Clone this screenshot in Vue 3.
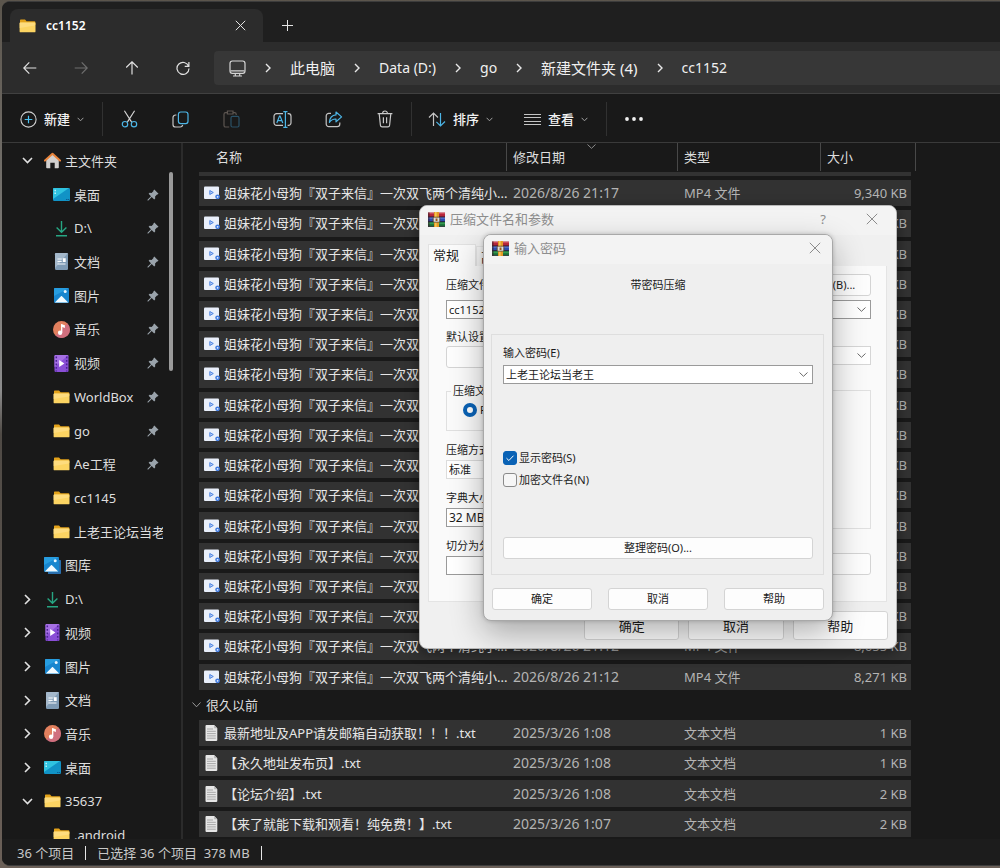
<template>
  <div class="desktop">
    <div class="window">
      <header class="tabs">
        <div class="tab">
          <FileIcon name="folder" />
          <span class="tab-title">cc1152</span>
          <button class="tab-close" aria-label="关闭标签页">
            <svg width="11" height="11" viewBox="0 0 11 11" fill="none" stroke="#e4e4e4"><path d="M.8.8l9.4 9.4M10.2.8L.8 10.2" /></svg>
          </button>
        </div>
        <button class="tab-new" aria-label="新标签页">
          <svg width="11" height="11" viewBox="0 0 11 11" fill="none" stroke="#e4e4e4"><path d="M5.5 0v11M0 5.5h11" /></svg>
        </button>
      </header>

      <nav class="navbar">
        <button class="nav-btn" aria-label="后退">
          <svg width="14" height="14" viewBox="0 0 14 14" fill="none" stroke="#e0e0e0" stroke-width="1.2"><path d="M13.3 7H1M6.3 1.4L.8 7l5.5 5.6" /></svg>
        </button>
        <button class="nav-btn" aria-label="前进" disabled>
          <svg width="14" height="14" viewBox="0 0 14 14" fill="none" stroke="#6e6e6e" stroke-width="1.2"><path d="M.7 7H13M7.7 1.4L13.2 7l-5.5 5.6" /></svg>
        </button>
        <button class="nav-btn" aria-label="向上">
          <svg width="14" height="14" viewBox="0 0 14 14" fill="none" stroke="#e0e0e0" stroke-width="1.2"><path d="M7 13.5V1M1.2 6.5L7 .8l5.8 5.7" /></svg>
        </button>
        <button class="nav-btn" aria-label="刷新">
          <svg width="14" height="14" viewBox="0 0 14 14" fill="none" stroke="#e0e0e0" stroke-width="1.2"><path d="M12.6 5.2A6 6 0 1 0 13 7.4M12.9 1v4.3H8.7" /></svg>
        </button>
        <div class="address">
          <svg width="17" height="17" viewBox="0 0 17 17" fill="none" stroke="#d5d5d5" stroke-width="1.2"><rect x="1" y="1" width="15" height="12.4" rx="2.4" /><path d="M1.5 10.8h14M6.3 13.4v2.6M10.7 13.4v2.6M4 16h9" /></svg>
          <template v-for="crumb in crumbs" :key="crumb.text">
            <svg width="6" height="10" viewBox="0 0 6 10" fill="none" stroke="#e8e8e8" stroke-width="1.4"><path d="M1 1l4 4-4 4" /></svg>
            <a href="#" class="crumb" :class="{ cjk: crumb.cjk }">{{ crumb.text }}</a>
          </template>
        </div>
      </nav>

      <div class="toolbar">
        <button class="tool new">
          <svg width="17" height="17" viewBox="0 0 17 17" fill="none"><circle cx="8.5" cy="8.5" r="7.6" stroke="#d0d0d0" stroke-width="1.1" /><path d="M8.5 4.7v7.6M4.7 8.5h7.6" stroke="#4cc2f1" stroke-width="1.2" /></svg>
          <span>新建</span>
          <svg class="caret" width="7" height="5" viewBox="0 0 7 5"><path d="M.6.8l2.9 3 2.9-3" /></svg>
        </button>
        <i class="divider"></i>
        <button class="tool icon" aria-label="剪切">
          <svg width="17" height="18" viewBox="0 0 17 18" fill="none" stroke-width="1.2"><path d="M3.4.8l7.4 11.6M13.6.8L6.2 12.4" stroke="#d0d0d0" /><circle cx="4" cy="14.2" r="2.7" stroke="#4cb5e6" /><circle cx="13" cy="14.2" r="2.7" stroke="#4cb5e6" /></svg>
        </button>
        <button class="tool icon" aria-label="复制">
          <svg width="17" height="17" viewBox="0 0 17 17" fill="none" stroke-width="1.2"><path d="M4.4 4H3.6A2.6 2.6 0 0 0 1 6.6v6.8A2.6 2.6 0 0 0 3.6 16h4.6a2.6 2.6 0 0 0 2.5-2" stroke="#c4c4c4" /><rect x="6.4" y="1" width="9.6" height="11.6" rx="2.4" stroke="#4cb5e6" /></svg>
        </button>
        <button class="tool icon" aria-label="粘贴" disabled>
          <svg width="17" height="18" viewBox="0 0 17 18" fill="none" stroke-width="1.2"><path d="M4.4 2.6H2.6C1.7 2.6 1 3.3 1 4.2v11.2c0 .9.7 1.6 1.6 1.6h3.6M10 2.6h1.6c.9 0 1.6.7 1.6 1.6v.8M4.4 1h5.6v3H4.4z" stroke="#5c5550" /><rect x="8" y="6.4" width="8" height="10.6" rx="1.5" stroke="#2a5166" /></svg>
        </button>
        <button class="tool icon" aria-label="重命名">
          <svg width="19" height="17" viewBox="0 0 19 17" fill="none" stroke-width="1.2"><path d="M10 2.6H3.6A2.6 2.6 0 0 0 1 5.2v6.6a2.6 2.6 0 0 0 2.6 2.6H10M14.6 2.6h.8A2.6 2.6 0 0 1 18 5.2v6.6a2.6 2.6 0 0 1-2.6 2.6h-.8" stroke="#c4c4c4" /><path d="M3.8 12l2.7-7h.6l2.7 7M4.8 9.7h4M12.4 1v15M10.3.7h4.2M10.3 16.3h4.2" stroke="#4cb5e6" /></svg>
        </button>
        <button class="tool icon" aria-label="共享">
          <svg width="18" height="17" viewBox="0 0 18 17" fill="none" stroke-width="1.2" stroke-linejoin="round"><path d="M6 2.4H3.8A2.6 2.6 0 0 0 1.2 5v8a2.6 2.6 0 0 0 2.6 2.6h8.4a2.6 2.6 0 0 0 2.6-2.6v-1.4" stroke="#c4c4c4" /><path d="M11 1l5.6 4.9L11 10.8V8C7.6 7.9 6 9 4.4 11.4 4.7 7 7 4.2 11 3.9z" stroke="#4cb5e6" /></svg>
        </button>
        <button class="tool icon" aria-label="删除">
          <svg width="16" height="18" viewBox="0 0 16 18" fill="none" stroke="#c8c8c8" stroke-width="1.2"><path d="M.6 3.6h14.8M5.6 3.4c0-3.2 4.8-3.2 4.8 0M2.2 3.8l1.2 11.4c.1 1 .8 1.7 1.8 1.7h5.6c1 0 1.700-.7 1.800-1.700l1.200-11.400M6.400 7.200v6M9.600 7.200v6" /></svg>
        </button>
        <i class="divider"></i>
        <button class="tool menu">
          <svg width="18" height="15" viewBox="0 0 18 15" fill="none" stroke-width="1.2"><path d="M5.5 14V1M1 5.5L5.5 1 10 5.5" stroke="#c4c4c4" /><path d="M12.5 1v13M8.4 9.8l4.1 4.2 4.5-4.5" stroke="#4cb5e6" /></svg>
          <span>排序</span>
          <svg class="caret" width="7" height="5" viewBox="0 0 7 5"><path d="M.6.8l2.9 3 2.9-3" /></svg>
        </button>
        <button class="tool menu">
          <svg width="17" height="13" viewBox="0 0 17 13" fill="none" stroke="#c4c4c4"><path d="M0 1.5h17M0 4.5h17M0 8.5h17M0 11.5h17" /></svg>
          <span>查看</span>
          <svg class="caret" width="7" height="5" viewBox="0 0 7 5"><path d="M.6.8l2.9 3 2.9-3" /></svg>
        </button>
        <i class="divider"></i>
        <button class="tool icon" aria-label="更多">
          <svg width="18" height="4" viewBox="0 0 18 4" fill="#f0f0f0"><circle cx="2" cy="2" r="1.9" /><circle cx="9" cy="2" r="1.9" /><circle cx="16" cy="2" r="1.9" /></svg>
        </button>
      </div>

      <main class="body">
        <aside class="sidebar">
          <ul class="tree">
            <li v-for="(item, i) in tree" :key="i" :class="{ child: item.child }">
              <span class="arrow">
                <svg v-if="item.arrow === 'down'" width="11" height="7" viewBox="0 0 11 7"><path d="M1 1l4.5 4.5L10 1" /></svg>
                <svg v-if="item.arrow === 'right'" width="7" height="11" viewBox="0 0 7 11"><path d="M1 1l4.5 4.5L1 10" /></svg>
              </span>
              <FileIcon :name="item.icon" />
              <span class="label">{{ item.text }}</span>
              <svg v-if="item.pinned" class="pin" width="12" height="12" viewBox="0 0 12 12"><path d="M7.3.5l4.2 4.2-1 .9-.5-.1-1.9 1.9.1 2-1 1L4.7 8l-3.4 3.5H.5v-.8L4 7.3 1.6 4.8l1-1 2 .1 1.900-1.900-.1-.6z" /></svg>
            </li>
          </ul>
          <div class="scrollbar"></div>
        </aside>

        <section class="files">
          <table>
            <colgroup>
              <col class="c-gutter" />
              <col class="c-name" />
              <col class="c-date" />
              <col class="c-type" />
              <col class="c-size" />
              <col class="c-end" />
            </colgroup>
            <thead>
              <tr>
                <td></td>
                <th class="h-name">名称</th>
                <th>
                  修改日期
                  <svg class="sort" width="9" height="5" viewBox="0 0 9 5" fill="none" stroke="#8c8c8c"><path d="M.5.5l4 3.8 4-3.8" /></svg>
                </th>
                <th>类型</th>
                <th>大小</th>
                <td class="h-end"></td>
              </tr>
            </thead>
            <tbody>
              <tr class="sliver">
                <td></td>
                <td colspan="4" class="cell"></td>
                <td></td>
              </tr>
              <tr v-for="(file, i) in videos" :key="'v' + i" class="file">
                <td></td>
                <td class="cell name"><div><FileIcon name="mp4" />{{ videoName }}</div></td>
                <td class="cell date">{{ file[0] }}</td>
                <td class="cell">MP4 文件</td>
                <td class="cell size">{{ file[1] }} KB</td>
                <td></td>
              </tr>
              <tr class="group">
                <td colspan="6">
                  <div>
                    <svg width="9" height="6" viewBox="0 0 9 6" fill="none" stroke="#9a9a9a"><path d="M.5.5l4 4.3 4-4.3" /></svg>
                    很久以前
                  </div>
                </td>
              </tr>
              <tr v-for="file in texts" :key="file[0]" class="file">
                <td></td>
                <td class="cell name"><div><FileIcon name="txt" />{{ file[0] }}</div></td>
                <td class="cell date">{{ file[1] }}</td>
                <td class="cell">文本文档</td>
                <td class="cell size">{{ file[2] }} KB</td>
                <td></td>
              </tr>
            </tbody>
          </table>
        </section>
      </main>

      <footer class="status">
        <span>36 个项目</span>
        <i></i>
        <span>已选择 36 个项目&nbsp; 378 MB</span>
        <i></i>
      </footer>
    </div>

    <form class="dialog archive" @submit.prevent>
      <div class="titlebar">
        <FileIcon name="rar" />
        <h2>压缩文件名和参数</h2>
        <button type="button" class="help" aria-label="帮助">?</button>
        <button type="button" class="close" aria-label="关闭"><svg width="12" height="12" viewBox="0 0 12 12"><path d="M.8.8l10.4 10.4M11.2.8L.8 11.2" /></svg></button>
      </div>
      <div class="pages">
        <button type="button" class="active">常规</button>
        <button type="button">高级</button>
      </div>
      <div class="panel">
        <div class="name-row">
          <label for="arc-name">压缩文件名(A)</label>
          <button type="button" class="btn">浏览(B)...</button>
        </div>
        <div class="combo">
          <input id="arc-name" v-model="archiveName" />
          <button type="button" aria-label="展开"><svg width="9" height="5" viewBox="0 0 9 5"><path d="M.5.5l4 3.8 4-3.8" /></svg></button>
        </div>
        <div class="columns">
          <div class="left">
            <label for="profile">默认设置</label>
            <button id="profile" type="button" class="btn">配置(F)...</button>
            <fieldset>
              <legend>压缩文件格式</legend>
              <label class="radio"><input type="radio" name="format" checked />RAR</label>
            </fieldset>
            <div class="field">
              <label for="method">压缩方式(C)</label>
              <select id="method" class="soft"><option>标准</option></select>
            </div>
            <div class="field">
              <label for="dict">字典大小(I)</label>
              <select id="dict" class="dict"><option>32 MB</option></select>
            </div>
            <div class="field">
              <label for="split">切分为分卷(V), 大小</label>
              <input id="split" class="text" />
            </div>
          </div>
          <div class="right">
            <label for="update">更新方式(U)</label>
            <div class="combo soft">
              <input id="update" />
              <button type="button" aria-label="展开"><svg width="9" height="5" viewBox="0 0 9 5"><path d="M.5.5l4 3.8 4-3.8" /></svg></button>
            </div>
            <fieldset><legend>压缩选项</legend></fieldset>
            <button type="button" class="btn" aria-label="设置密码"></button>
          </div>
        </div>
      </div>
      <div class="actions">
        <button type="button" class="btn">确定</button>
        <button type="button" class="btn">取消</button>
        <button type="button" class="btn">帮助</button>
      </div>
    </form>

    <form class="dialog password" @submit.prevent>
      <div class="titlebar">
        <FileIcon name="rar" />
        <h2>输入密码</h2>
        <button type="button" class="close" aria-label="关闭"><svg width="12" height="12" viewBox="0 0 12 12"><path d="M.8.8l10.4 10.4M11.2.8L.8 11.2" /></svg></button>
      </div>
      <p class="heading">带密码压缩</p>
      <div class="box">
        <label for="pwd">输入密码(E)</label>
        <div class="combo">
          <input id="pwd" v-model="password" />
          <button type="button" aria-label="展开"><svg width="9" height="5" viewBox="0 0 9 5"><path d="M.5.5l4 3.8 4-3.8" /></svg></button>
        </div>
        <div class="checks">
          <label><input v-model="showPassword" type="checkbox" />显示密码(S)</label>
          <label><input v-model="encryptNames" type="checkbox" />加密文件名(N)</label>
        </div>
        <button type="button" class="btn">整理密码(O)...</button>
      </div>
      <div class="actions">
        <button type="button" class="btn">确定</button>
        <button type="button" class="btn">取消</button>
        <button type="button" class="btn">帮助</button>
      </div>
    </form>
  </div>
</template>

<script setup>
import { ref, h } from 'vue'

const archiveName = ref('cc1152.rar')
const password = ref('上老王论坛当老王')
const showPassword = ref(true)
const encryptNames = ref(false)

// [width, height, svg body]
const icons = {
  folder: [17, 14, '<path d="M1 1.6C1 1 1.4.6 2 .6h4l1.600 1.700h7.900c.5 0 .9.4.9.9V6H1z" fill="#e3a21a"/><path d="M.6 4.100c0-.4.3-.7.7-.7h14.500c.4 0 .7.3.7.7v8.300c0 .5-.4.9-.9.9H1.500c-.5 0-.9-.4-.9-.9z" fill="#fcd462"/><path d="M.6 4.100c0-.4.3-.7.7-.7h14.500v3L.6 9z" fill="#ffe08a" opacity=".7"/>'],
  home: [17, 17, '<path d="M2.200 7.600L8.500 2l6.300 5.600v7.800c0 .5-.3.8-.8.8h-3.300v-5.400H6.300v5.400H3c-.5 0-.8-.3-.8-.8z" fill="#d2d0ce"/><path d="M1 8.600L8.500 1.800 16 8.600" fill="none" stroke="#e8833a" stroke-width="2" stroke-linecap="round" stroke-linejoin="round"/>'],
  desktop: [17, 13, '<rect width="17" height="13" rx="1.2" fill="#1193c6"/><path d="M0 1.200C0 .5.5 0 1.200 0H16L0 11z" fill="#2fc3e0"/><path d="M1.500 1.800h1.400v1.400H1.500zM1.500 4.600h1.400V6H1.500z" fill="#c9f4fb"/><path d="M13 11h1.500v1H13zM15 11h1.200v1H15z" fill="#0a5c93"/>'],
  download: [17, 17, '<path d="M8.500 1v11M3.600 7.500l4.900 4.800 4.900-4.800M3 15.800h11" fill="none" stroke="#27a683" stroke-width="1.4"/>'],
  doc: [17, 17, '<rect x="2" width="13" height="17" rx="1.2" fill="#7f9bb5"/><path d="M2 1.200C2 .5 2.500 0 3.200 0H15L2 15z" fill="#a4b8cb"/><path d="M4.500 6h4.200M4.500 8.500h4.200M4.500 11h8" stroke="#f4f8fb" stroke-width="1.2"/><path d="M9.800 5.200h2.900V9H9.800z" fill="#fff"/>'],
  picture: [17, 17, '<rect x="1" y="1" width="15" height="15" rx="1.2" fill="#1886cf"/><path d="M1 9V2.200C1 1.500 1.500 1 2.200 1H16z" fill="#279de0"/><path d="M1.800 15.500L8 9.300c.3-.3.7-.3 1 0l6.200 6.200z" fill="#f3fbff"/><circle cx="12.2" cy="4.6" r="1.5" fill="#e9f7ff"/>'],
  gallery: [17, 17, '<path d="M4 3h12c.6 0 1 .4 1 1v12c0 .6-.4 1-1 1H4z" fill="#2a6fae"/><rect width="15" height="15" rx="1.2" fill="#1886cf"/><path d="M0 8V1.200C0 .5.5 0 1.200 0H15z" fill="#279de0"/><path d="M.8 14.500L7 8.300c.3-.3.7-.3 1 0l6.200 6.200z" fill="#f3fbff"/><circle cx="11.2" cy="3.8" r="1.5" fill="#e9f7ff"/>'],
  music: [17, 17, '<circle cx="8.5" cy="8.5" r="8.5" fill="#e2805e"/><path d="M17 8.500A8.500 8.500 0 0 1 2.500 14.500L14.500 2.500a8.500 8.500 0 0 1 2.500 6z" fill="#c9698a" opacity=".75"/><path d="M8.700 3.200v8.300" stroke="#fff" stroke-width="1.3"/><path d="M8 3l3.900 1.300v2.600L8.700 5.800z" fill="#fff"/><circle cx="7.1" cy="11.7" r="2.2" fill="#fff"/>'],
  video: [17, 17, '<rect x="1.5" width="14" height="17" rx="1.2" fill="#8a4fd6"/><path d="M1.500 1.200C1.500.5 2 0 2.700 0h12.800L1.500 12z" fill="#a670e4"/><path d="M3.300 1.500v15M13.700 1.500v15" stroke="#4b2394" stroke-width="1.5" stroke-dasharray="1.8 1.7"/><path d="M6.200 5l5.200 3.500L6.200 12z" fill="#fff"/>'],
  mp4: [17, 14, '<rect width="15" height="12.5" rx="1" y=".5" fill="#e9effb"/><path d="M5.800 4.500v4l3.500-2z" fill="#b9cdf5" stroke="#3f7ae0" stroke-width=".9"/><circle cx="13.6" cy="10.8" r="2.4" fill="#3f7ae0"/><circle cx="13.6" cy="10.8" r=".9" fill="#e9effb"/>'],
  txt: [17, 16, '<path d="M1.500 1c0-.5.4-.9.9-.9h7.800l3.100 3.100V15c0 .5-.4.9-.9.9h-10c-.5 0-.9-.4-.9-.9z" fill="#e6e6e6"/><path d="M3 4h6M3 6.300h8.800M3 8.600h8.800M3 10.900h8.800M3 13.200h8.800" stroke="#a8a8a8"/><path d="M10.200.1v3.100h3.100z" fill="#b5b5b5"/>'],
  rar: [17, 15, '<path d="M0 .5h17v4.800H0z" fill="#b3243a"/><path d="M0 5.300h17v4.700H0z" fill="#2c4db0"/><path d="M0 10h17v4.700H0z" fill="#1d7a3c"/><path d="M0 1.600h17" stroke="#d0505c"/><path d="M0 6.300h17" stroke="#5876d2"/><path d="M0 11.200h17" stroke="#45a55a"/><path d="M0 4.900h17M0 9.600h17M0 14.300h17" stroke="#231a2a" stroke-width=".8"/><path d="M0 .5h1.600v14.200H0z" fill="#38202c" opacity=".6"/><path d="M6 0h5v15H6z" fill="#e59a25"/><path d="M7.200 0h1.300v15H7.200z" fill="#f8cf62"/><rect x="5.2" y="5.2" width="6.6" height="5" rx="1" fill="#d9dbe0" stroke="#5d4222" stroke-width=".8"/><path d="M7.600 6.600h1.900v2.300H7.600z" fill="#9c5b16"/>'],
}

const FileIcon = (props) => {
  const [width, height, body] = icons[props.name]
  return h('svg', { class: 'ico', width, height, viewBox: `0 0 ${width} ${height}`, innerHTML: body })
}
FileIcon.props = ['name']

const crumbs = [
  { text: '此电脑', cjk: true },
  { text: 'Data (D:)' },
  { text: 'go' },
  { text: '新建文件夹 (4)', cjk: true },
  { text: 'cc1152' },
]

const tree = [
  { icon: 'home', text: '主文件夹', arrow: 'down' },
  { icon: 'desktop', text: '桌面', child: true, pinned: true },
  { icon: 'download', text: 'D:\\', child: true, pinned: true },
  { icon: 'doc', text: '文档', child: true, pinned: true },
  { icon: 'picture', text: '图片', child: true, pinned: true },
  { icon: 'music', text: '音乐', child: true, pinned: true },
  { icon: 'video', text: '视频', child: true, pinned: true },
  { icon: 'folder', text: 'WorldBox', child: true, pinned: true },
  { icon: 'folder', text: 'go', child: true, pinned: true },
  { icon: 'folder', text: 'Ae工程', child: true, pinned: true },
  { icon: 'folder', text: 'cc1145', child: true },
  { icon: 'folder', text: '上老王论坛当老', child: true },
  { icon: 'gallery', text: '图库' },
  { icon: 'download', text: 'D:\\', arrow: 'right' },
  { icon: 'video', text: '视频', arrow: 'right' },
  { icon: 'picture', text: '图片', arrow: 'right' },
  { icon: 'doc', text: '文档', arrow: 'right' },
  { icon: 'music', text: '音乐', arrow: 'right' },
  { icon: 'desktop', text: '桌面', arrow: 'right' },
  { icon: 'folder', text: '35637', arrow: 'down' },
  { icon: 'folder', text: '.android', child: true },
]

const videoName = '姐妹花小母狗『双子来信』一次双飞两个清纯小...'

const videos = [
  ['2026/8/26 21:17', '9,340'],
  ...Array.from({ length: 14 }, () => ['2026/8/26 21:12', '8,900']),
  ['2026/8/26 21:12', '8,655'],
  ['2026/8/26 21:12', '8,271'],
]

const texts = [
  ['最新地址及APP请发邮箱自动获取！！！.txt', '2025/3/26 1:08', 1],
  ['【永久地址发布页】.txt', '2025/3/26 1:08', 1],
  ['【论坛介绍】.txt', '2025/3/26 1:08', 2],
  ['【来了就能下载和观看！纯免费！】.txt', '2025/3/26 1:07', 2],
]
</script>

<style>
body {
  background: #4d4741;
}
</style>

<style scoped>
* {
  box-sizing: border-box;
}

.desktop {
  position: relative;
  height: 100vh;
  padding: 1px 0 2px 2px;
  overflow: hidden;
  background: linear-gradient(#5b554c, #8c8c8c 45%, #4f4a45 50%, #6b6058);
  font: 13px/16px "Noto Sans", "Noto Sans CJK SC", sans-serif;
  text-spacing-trim: space-all;
  color: #dedede;
}

button,
input,
select {
  font: inherit;
  color: inherit;
}

button {
  margin: 0;
  padding: 0;
  border: 0;
  background: none;
}

svg {
  display: block;
  flex: none;
}

.window {
  display: flex;
  flex-direction: column;
  height: 100%;
  border: 1px solid #3c3c3c;
  border-right: 0;
  border-left: 0;
  border-radius: 8px 0 0 8px;
  background: #191919;
  overflow: hidden;
}

.tabs {
  display: flex;
  align-items: flex-end;
  height: 40px;
  flex: none;
  background: #1f1f1f;
}

.tab {
  display: flex;
  align-items: center;
  width: 253px;
  height: 33px;
  margin-left: 8px;
  padding: 0 17px 0 9px;
  border-radius: 8px 8px 0 0;
  background: #2c2c2c;
}

.tab-title {
  flex: 1;
  margin-left: 10px;
  font-size: 12px;
  font-weight: 600;
  color: #fff;
}

.tab-new {
  display: grid;
  place-items: center;
  width: 48px;
  height: 33px;
}

.navbar {
  display: flex;
  align-items: center;
  height: 52px;
  flex: none;
  padding: 1px 0 0 2px;
  background: #2c2c2c;
  border-bottom: 1px solid #404040;
}

.nav-btn {
  display: grid;
  place-items: center;
  width: 51px;
  height: 34px;
}

.address {
  display: flex;
  flex: 1;
  align-items: center;
  gap: 19px;
  height: 34px;
  margin-left: 6px;
  padding-left: 15px;
  border-radius: 4px 0 0 4px;
  background: #373737;
}

.crumb {
  font-size: 14px;
  line-height: 20px;
  color: #f0f0f0;
  text-decoration: none;
  white-space: nowrap;
}

.crumb.cjk {
  font-size: 15px;
}

.toolbar {
  display: flex;
  align-items: center;
  height: 49px;
  flex: none;
  padding-top: 2px;
  border-bottom: 1px solid #3a3a3a;
}

.tool {
  display: flex;
  align-items: center;
  gap: 7px;
  height: 34px;
  font-weight: 500;
  color: #f2f2f2;
}

.tool.new {
  width: 99px;
  padding-left: 18px;
}

.tool.icon {
  justify-content: center;
  width: 51px;
}

.tool.menu {
  width: 96px;
  padding-left: 15px;
}

.caret {
  fill: none;
  stroke: #a0a0a0;
}

.divider {
  width: 1px;
  height: 34px;
  margin: 0 1px;
  background: #313131;
}

.body {
  display: flex;
  flex: 1;
  min-height: 0;
}

.sidebar {
  position: relative;
  width: 181px;
  flex: none;
  overflow: hidden;
  border-right: 2px solid #2b2b2b;
}

.tree {
  display: grid;
  grid-auto-rows: 1fr;
  height: calc(100% + 12px);
  width: 161px;
  margin: 1px 0 0;
  padding: 0;
  list-style: none;
}

.tree li {
  display: flex;
  align-items: center;
  min-width: 0;
  padding-left: 18px;
}

.tree .arrow {
  display: grid;
  place-items: center;
  width: 14px;
  margin-right: 10px;
  fill: none;
  stroke: #e2e2e2;
  stroke-width: 1.6;
}

.tree .child .arrow {
  margin-right: 19px;
}

.tree .label {
  flex: 1;
  margin-left: 4px;
  overflow: hidden;
  white-space: nowrap;
}

.pin {
  margin-right: 4px;
  fill: #9aa3ab;
}

.scrollbar {
  position: absolute;
  top: 29px;
  right: 8px;
  width: 4px;
  height: 199px;
  border-radius: 2px;
  background: #9a9a9a;
}

.files {
  flex: 1;
  min-width: 0;
  overflow: hidden;
  padding-left: 7px;
}

table {
  table-layout: fixed;
  width: 726px;
  height: calc(100% + 2px);
  border-spacing: 0;
  border-collapse: separate;
}

.c-gutter {
  width: 9px;
}

.c-name {
  width: 308px;
}

.c-date {
  width: 171px;
}

.c-type {
  width: 143px;
}

.c-size {
  width: 90px;
}

.c-end {
  width: 5px;
}

td,
th {
  padding: 0;
  white-space: nowrap;
}

thead tr {
  height: 28px;
}

th {
  position: relative;
  padding-left: 6px;
  border-right: 1px solid #484848;
  font-weight: 400;
  text-align: left;
}

th:nth-last-child(2) {
  border-right: 0;
}

.h-name {
  padding-left: 17px;
}

.h-end {
  border-right: 1px solid #484848;
}

.sort {
  position: absolute;
  top: 1px;
  left: 47%;
}

.cell {
  border-bottom: 4px solid #191919;
  background: #323232;
  background-clip: padding-box;
  padding-left: 6px;
  color: #b4b4b4;
}

.sliver {
  height: 9px;
}

.sliver .cell {
  border-top: 1px solid #191919;
}

.file {
  height: 30px;
}

.name > div {
  display: flex;
  align-items: center;
  gap: 3px;
  color: #e6e6e6;
}

.name {
  padding-left: 5px;
}

.date {
  font-size: 14px;
}

.size {
  padding-right: 4px;
  text-align: right;
}

.group {
  height: 26px;
}

.group td {
  border-bottom: 4px solid #191919;
}

.group div {
  display: flex;
  align-items: center;
  gap: 5px;
  padding-left: 2px;
}

.status {
  display: flex;
  align-items: center;
  gap: 11px;
  height: 26px;
  flex: none;
  padding: 1px 0 0 15px;
  background: #1c1c1c;
  color: #c8c8c8;
}

.status i {
  width: 1px;
  height: 14px;
  background: #e6e6e6;
}

.dialog {
  position: absolute;
  display: flex;
  flex-direction: column;
  border: 1px solid #b9b9b9;
  border-radius: 8px;
  background: #f0f0f0;
  color: #1b1b1b;
  font-size: 11px;
  line-height: 14px;
  overflow: hidden;
}

.archive {
  top: 205px;
  left: 419px;
  width: 478px;
  box-shadow: 0 4px 14px rgba(0, 0, 0, 0.4);
}

.password {
  top: 234px;
  left: 483px;
  width: 350px;
  border-color: #a8a8a8;
  background: #efefef;
  box-shadow: 0 12px 32px rgba(0, 0, 0, 0.3), 0 0 4px rgba(0, 0, 0, 0.2);
}

.titlebar {
  display: flex;
  align-items: center;
  height: 29px;
  padding: 0 18px 3px 8px;
  background: #f3f3f3;
  color: #8e8e8e;
}

.titlebar h2 {
  flex: 1;
  margin: 0 0 0 5px;
  font-size: 13px;
  font-weight: 400;
  line-height: 16px;
}

.titlebar .help {
  margin-right: 40px;
  font-size: 13px;
}

.close svg {
  fill: none;
  stroke: #8b8b8b;
}

.password .titlebar {
  padding-right: 11px;
}

.btn {
  height: 22px;
  border: 1px solid #d4d4d4;
  border-radius: 3px;
  background: #fdfdfd;
}

.combo {
  display: flex;
  align-items: center;
  height: 19px;
  border: 1px solid #9a9a9a;
  background: #fff;
}

.combo.soft {
  border-color: #d6d6d6;
}

.combo input {
  flex: 1;
  min-width: 0;
  padding: 0 2px;
  border: 0;
  background: none;
  outline: 0;
}

.combo button {
  padding: 0 4px;
}

.combo svg {
  fill: none;
  stroke: #6a6a6a;
}

.pages {
  display: flex;
  align-items: flex-end;
  margin: 9px 9px 0 8px;
  font-size: 13px;
  line-height: 16px;
}

.pages button {
  width: 48px;
  height: 20px;
  padding-left: 4px;
  border: 1px solid #e2e2e2;
  border-bottom: 0;
  background: #f2f2f2;
  text-align: left;
}

.pages .active {
  height: 22px;
  padding-bottom: 2px;
  background: #fafafa;
}

.panel {
  margin: 0 9px 0 8px;
  padding: 8px 15px 26px 17px;
  border: 1px solid #e4e4e4;
  border-top: 0;
  background: #fafafa;
}

.name-row {
  display: flex;
  align-items: center;
  justify-content: space-between;
  margin-bottom: 4px;
}

.name-row .btn {
  width: 76px;
}

.columns {
  display: flex;
  gap: 18px;
}

.left,
.right {
  display: flex;
  flex: 1;
  flex-direction: column;
  padding-top: 11px;
}

.left > .btn {
  margin-top: 2px;
}

fieldset {
  margin: 16px 0 0;
  padding: 5px 16px 13px;
  border: 1px solid #e0e0e0;
}

.left legend {
  margin-left: -12px;
  padding: 0 2px;
}

.radio {
  display: flex;
  align-items: center;
  gap: 3px;
}

input[type="radio"],
input[type="checkbox"] {
  width: 14px;
  height: 14px;
  margin: 0;
  appearance: none;
  border: 1px solid #8a8a8a;
  background: #f6f6f6;
}

input[type="radio"]:checked {
  border: 4px solid #0a62b5;
  border-radius: 50%;
  background: #fff;
}

.field {
  display: flex;
  flex-direction: column;
  gap: 3px;
  margin-top: 12px;
}

select,
.text {
  height: 19px;
  padding: 0 2px;
  appearance: none;
  border: 1px solid #9a9a9a;
  border-radius: 0;
  background: #fff;
}

select.soft {
  border-color: #dcdcdc;
}

.dict {
  font-size: 12px;
}

.right .combo {
  margin-top: 2px;
}

.right fieldset {
  flex: 1;
  margin: 18px 0 24px;
}

.right > .btn {
  flex: none;
}

.actions {
  display: flex;
  gap: 9px;
}

.actions .btn {
  flex: 1;
}

.archive .actions {
  margin: 9px 8px 8px 164px;
  font-size: 13px;
  line-height: 16px;
}

.archive .actions .btn {
  height: 29px;
}

.heading {
  margin: 14px 0 42px;
  text-align: center;
}

.box {
  display: flex;
  flex-direction: column;
  margin: 0 8px 0 7px;
  padding: 11px 10px 15px 11px;
  border: 1px solid #dedede;
}

.box .combo {
  margin-top: 5px;
}

.checks {
  display: flex;
  flex-direction: column;
  gap: 8px;
  margin: 67px 0 50px;
}

.checks label {
  display: flex;
  align-items: center;
  gap: 2px;
}

input[type="checkbox"] {
  border-radius: 3px;
}

input[type="checkbox"]:checked {
  border-color: #0a62b5;
  background: #0a62b5 url("data:image/svg+xml,%3Csvg xmlns='http://www.w3.org/2000/svg' viewBox='0 0 12 12' fill='none' stroke='%23fff'%3E%3Cpath d='M2.5 6.2l2.4 2.3 4.6-4.8'/%3E%3C/svg%3E");
}

.password .actions {
  gap: 16px;
  margin: 13px 8px 10px;
}
</style>
